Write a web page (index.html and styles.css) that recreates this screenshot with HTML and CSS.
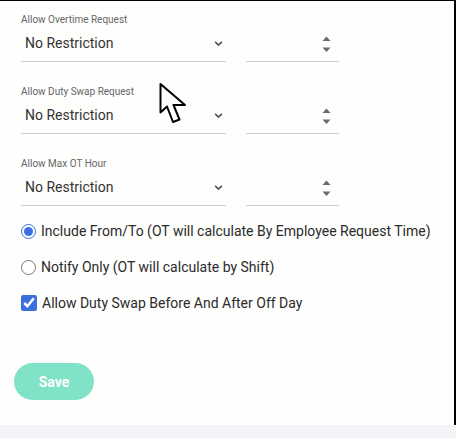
FILE: index.html
```html
<!DOCTYPE html>
<html lang="en">
<head>
    <meta charset="UTF-8">
    <meta name="viewport" content="width=device-width, initial-scale=1.0">
    <title>Request Settings</title>
    <link rel="stylesheet" href="styles.css">
</head>
<body>
    <div class="panel">
        <div class="settings">
            <div class="field-group">
                <div class="field-label">Allow Overtime Request</div>
                <div class="field-row">
                    <div class="select-box">
                        <span>No Restriction</span>
                        <svg class="chevron" width="10" height="6" viewBox="0 0 10 6"><path d="M1 1 L5 5 L9 1" /></svg>
                    </div>
                    <div class="number-box">
                        <svg class="spinner" width="9" height="17" viewBox="0 0 9 17"><path d="M0.5 5 L4.5 0.5 L8.5 5 Z M0.5 11.5 L8.5 11.5 L4.5 16 Z" /></svg>
                    </div>
                </div>
            </div>
            <div class="field-group">
                <div class="field-label">Allow Duty Swap Request</div>
                <div class="field-row">
                    <div class="select-box">
                        <span>No Restriction</span>
                        <svg class="chevron" width="10" height="6" viewBox="0 0 10 6"><path d="M1 1 L5 5 L9 1" /></svg>
                    </div>
                    <div class="number-box">
                        <svg class="spinner" width="9" height="17" viewBox="0 0 9 17"><path d="M0.5 5 L4.5 0.5 L8.5 5 Z M0.5 11.5 L8.5 11.5 L4.5 16 Z" /></svg>
                    </div>
                </div>
            </div>
            <div class="field-group">
                <div class="field-label">Allow Max OT Hour</div>
                <div class="field-row">
                    <div class="select-box">
                        <span>No Restriction</span>
                        <svg class="chevron" width="10" height="6" viewBox="0 0 10 6"><path d="M1 1 L5 5 L9 1" /></svg>
                    </div>
                    <div class="number-box">
                        <svg class="spinner" width="9" height="17" viewBox="0 0 9 17"><path d="M0.5 5 L4.5 0.5 L8.5 5 Z M0.5 11.5 L8.5 11.5 L4.5 16 Z" /></svg>
                    </div>
                </div>
            </div>

            <div class="options">
                <label class="option"><input type="radio" name="ot-mode" checked> Include From/To (OT will calculate By Employee Request Time)</label>
                <label class="option"><input type="radio" name="ot-mode"> Notify Only (OT will calculate by Shift)</label>
                <label class="option"><input type="checkbox" checked> Allow Duty Swap Before And After Off Day</label>
            </div>
        </div>

        <button class="save-btn" type="button">Save</button>

        <svg class="cursor" width="32" height="44" viewBox="0 0 32 44">
            <path d="M2.5 2 L2.5 30.5 L9 24.5 L15 40 L21.5 37.5 L15.5 23 L27 23 Z" />
        </svg>
    </div>
    <div class="footer-strip"></div>
</body>
</html>
```

FILE: styles.css
```css
body {
    margin: 0;
    padding: 0;
    font-family: Roboto, "Liberation Sans", Arial, sans-serif;
    background: #fff;
    color: #2b2b2b;
}
.panel {
    position: relative;
    box-sizing: border-box;
    height: 425px;
    padding-top: 13px;
    background: #fefefd;
    border-top: 1px solid #000;
    border-right: 2px solid #000;
}
.settings {
    padding-left: 21px;
}
.field-group + .field-group {
    margin-top: 24px;
}
.field-label {
    font-size: 10px;
    line-height: 12px;
    color: #666;
    margin-bottom: 2px;
}
.field-row {
    display: flex;
}
.select-box {
    box-sizing: border-box;
    width: 205px;
    height: 34px;
    display: flex;
    align-items: center;
    justify-content: space-between;
    padding: 0 3px 3px 4px;
    font-size: 14px;
    line-height: 30px;
    color: #333;
    border-bottom: 1px solid #cfcfcf;
}
.chevron {
    width: 9px;
    height: 5px;
    overflow: visible;
}
.chevron path {
    fill: none;
    stroke: #555;
    stroke-width: 2;
}
.number-box {
    box-sizing: border-box;
    width: 93px;
    height: 34px;
    margin-left: 20px;
    display: flex;
    align-items: center;
    justify-content: flex-end;
    padding: 0 8px 1px 0;
    border-bottom: 1px solid #cfcfcf;
}
.spinner path {
    fill: #6a6a6a;
}
.options {
    margin-top: 15px;
    display: flex;
    flex-direction: column;
    gap: 16px;
}
.option {
    display: flex;
    align-items: center;
    gap: 5px;
    font-size: 14px;
    line-height: 20px;
    color: #2b2b2b;
}
.option input {
    width: 15px;
    height: 15px;
    margin: 0;
    accent-color: #3b6fe0;
}
.option input[type="checkbox"] {
    width: 16px;
    height: 16px;
}
.save-btn {
    display: block;
    margin: 50px 0 0 14px;
    width: 80px;
    height: 37px;
    border: none;
    border-radius: 19px;
    background-color: #80e2c6;
    color: #fff;
    font-family: Roboto, "Liberation Sans", Arial, sans-serif;
    font-size: 14px;
    font-weight: bold;
    cursor: pointer;
}
.cursor {
    position: absolute;
    left: 158px;
    top: 81px;
}
.cursor path {
    fill: #fff;
    stroke: #000;
    stroke-width: 2;
    stroke-linejoin: round;
}
.footer-strip {
    height: 13px;
    background: #f3f4f8;
}
```
